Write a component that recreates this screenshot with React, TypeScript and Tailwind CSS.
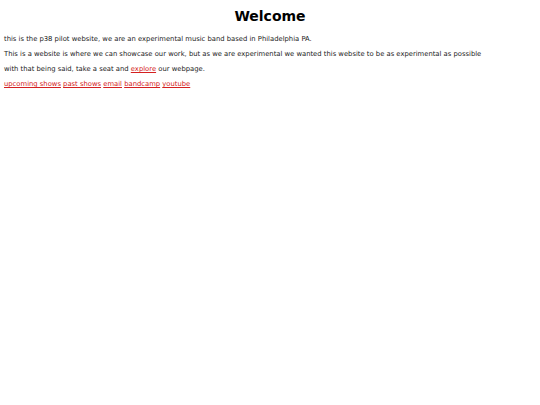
export default function App() {
  return (
    <div className="min-h-[405px] bg-white px-1 text-[#222] font-['DejaVu_Sans',Verdana,sans-serif]">
      <h1 className="pt-[8px] pb-[10px] text-center text-[14px] font-bold leading-[17px] text-black">Welcome</h1>
      <div className="flex flex-col gap-[6px] text-[6.8px] leading-[9px]">
        <p>this is the p38 pilot website, we are an experimental music band based in Philadelphia PA.</p>
        <p>This is a website is where we can showcase our work, but as we are experimental we wanted this website to be as experimental as possible</p>
        <p>
          with that being said, take a seat and <a href="#" className="text-[#d42020] underline">explore</a> our webpage.
        </p>
        <p className="text-[#d42020]">
          <a href="#" className="underline">upcoming shows</a> <a href="#" className="underline">past shows</a>{" "}
          <a href="#" className="underline">email</a> <a href="#" className="underline">bandcamp</a>{" "}
          <a href="#" className="underline">youtube</a>
        </p>
      </div>
    </div>
  );
}
